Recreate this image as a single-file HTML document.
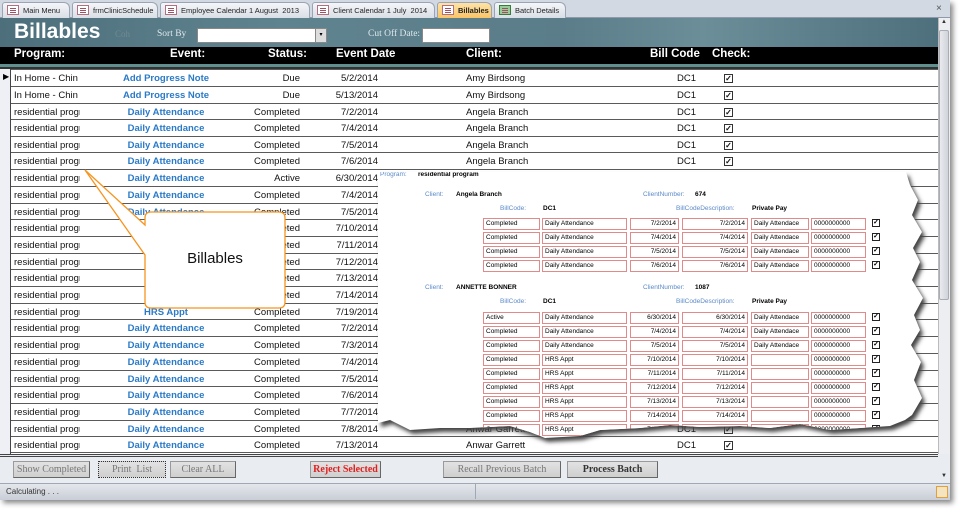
<!DOCTYPE html>
<html><head><meta charset="utf-8">
<style>
*{margin:0;padding:0;box-sizing:border-box}
body{width:960px;height:512px;background:#fff;position:relative;overflow:hidden;font-family:"Liberation Sans",sans-serif}
.a{position:absolute;white-space:nowrap}
.tab{position:absolute;top:2px;height:16px;background:linear-gradient(#f4f6f9,#d9dee6);border:1px solid #9aa4b2;border-bottom:none;border-radius:3px 6px 0 0;font-size:7.5px;color:#222;padding:3px 0 0 20px;white-space:nowrap;overflow:hidden}
.tab i{position:absolute;left:4px;top:2px;width:12px;height:10px;border:1px solid #b07080;background:#fff}
.tab i:after{content:"";position:absolute;left:2px;top:2px;width:6px;height:1px;background:#a05060;box-shadow:0 2px #a05060,0 4px #a05060}
.ch{position:absolute;top:48px;color:#fff;font-weight:bold;font-size:11.5px}
.row{position:absolute;left:11px;width:927px;height:17px;border-top:1px solid #5a5a5a;font-size:9.5px;color:#111}
.row span{position:absolute;top:3px;white-space:nowrap}
.p{left:3px;width:66px;overflow:hidden}
.e{left:80px;width:150px;text-align:center;color:#2a7ac8;font-weight:bold}
.s{right:638px;text-align:right}
.d{right:560px;text-align:right}
.c{left:455px}
.b{right:242px}
.k{left:713px;top:4px!important;width:9px;height:9px;border:1px solid #333;font-size:8px;line-height:7px;text-align:center;font-weight:bold}
.btn{position:absolute;top:461px;height:17px;background:linear-gradient(#e2e2e2,#cfcfcf);border:1px solid #9a9a9a;border-right-color:#666;border-bottom-color:#666;font-family:"Liberation Serif",serif;font-size:10px;color:#777;text-align:center;line-height:15px}
.rp{position:absolute;font-size:6.5px;white-space:nowrap}
.lb{color:#5b8ac8}
.bx{position:absolute;height:12px;border:1px solid #e08a8a;font-size:6.5px;line-height:10px;padding:0 2px;white-space:nowrap;overflow:hidden;background:#fff}
.r{text-align:right}
.cb{position:absolute;width:8px;height:8px;border:1px solid #222;font-size:7px;line-height:6px;text-align:center;font-weight:bold}
</style></head><body>
<div class="a" style="left:0;top:0;width:950px;height:500px;background:#e9ecf0;box-shadow:3px 3px 5px #888"></div>
<div class="a" style="left:0;top:0;width:950px;height:18px;background:#d3d9e2;border-bottom:1px solid #8e9aaa"></div>
<div class="tab" style="left:2px;width:68px"><i></i>Main Menu</div>
<div class="tab" style="left:72px;width:86px"><i></i>frmClinicSchedule</div>
<div class="tab" style="left:160px;width:150px"><i></i>Employee Calendar 1 August&nbsp; 2013</div>
<div class="tab" style="left:312px;width:123px"><i></i>Client Calendar 1 July&nbsp; 2014</div>
<div class="tab" style="left:437px;width:55px;background:linear-gradient(#fde3a8,#f9c466);font-weight:bold"><i></i>Billables</div>
<div class="tab" style="left:494px;width:72px"><i style="border-color:#3a7a3a;background:#9c9"></i>Batch Details</div>
<div class="a" style="left:936px;top:3px;font-size:10px;color:#555">×</div>
<div class="a" style="left:0;top:18px;width:938px;height:30px;background:linear-gradient(90deg,#4d6f7c 0%,#5f838f 30%,#5a7d89 60%,#6b8e99 75%,#4e6f7c 100%)"></div>
<div class="a" style="left:14px;top:20px;color:#fff;font-weight:bold;font-size:21px">Billables</div>
<div class="a" style="left:115px;top:29px;color:#6f8a94;font-family:'Liberation Serif',serif;font-size:9px">Coh</div>
<div class="a" style="left:157px;top:29px;color:#dfe8ec;font-family:'Liberation Serif',serif;font-size:9.5px">Sort By</div>
<div class="a" style="left:197px;top:28px;width:130px;height:15px;background:#fff;border:1px solid #888"></div>
<div class="a" style="left:315px;top:29px;width:11px;height:13px;background:#ddd;border-left:1px solid #888;font-size:6px;text-align:center;line-height:13px">▾</div>
<div class="a" style="left:368px;top:29px;color:#dfe8ec;font-family:'Liberation Serif',serif;font-size:9.5px">Cut Off Date:</div>
<div class="a" style="left:422px;top:28px;width:68px;height:15px;background:#fff;border:1px solid #888"></div>
<div class="a" style="left:0;top:47px;width:938px;height:17px;background:#000"></div>
<div class="a" style="left:0;top:64px;width:938px;height:3px;background:#5f8f8f"></div>
<div class="a" style="left:0;top:67px;width:938px;height:2px;background:#333"></div>
<div class="ch" style="left:14px">Program:</div>
<div class="ch" style="left:170px">Event:</div>
<div class="ch" style="left:268px">Status:</div>
<div class="ch" style="left:336px">Event Date</div>
<div class="ch" style="left:466px">Client:</div>
<div class="ch" style="left:650px">Bill Code</div>
<div class="ch" style="left:712px">Check:</div>
<div class="a" style="left:0;top:69px;width:938px;height:386px;background:#fff"></div>
<div class="a" style="left:0;top:69px;width:11px;height:386px;background:#eef0f6;border-right:1px solid #444"></div>
<div class="a" style="left:3px;top:72px;font-size:8px">▶</div>
<div class="row" style="top:69px"><span class="p">In Home - Chin</span><span class="e">Add Progress Note</span><span class="s">Due</span><span class="d">5/2/2014</span><span class="c">Amy Birdsong</span><span class="b">DC1</span><span class="k">✓</span></div>
<div class="row" style="top:86px"><span class="p">In Home - Chin</span><span class="e">Add Progress Note</span><span class="s">Due</span><span class="d">5/13/2014</span><span class="c">Amy Birdsong</span><span class="b">DC1</span><span class="k">✓</span></div>
<div class="row" style="top:103px"><span class="p">residential program</span><span class="e">Daily Attendance</span><span class="s">Completed</span><span class="d">7/2/2014</span><span class="c">Angela Branch</span><span class="b">DC1</span><span class="k">✓</span></div>
<div class="row" style="top:119px"><span class="p">residential program</span><span class="e">Daily Attendance</span><span class="s">Completed</span><span class="d">7/4/2014</span><span class="c">Angela Branch</span><span class="b">DC1</span><span class="k">✓</span></div>
<div class="row" style="top:136px"><span class="p">residential program</span><span class="e">Daily Attendance</span><span class="s">Completed</span><span class="d">7/5/2014</span><span class="c">Angela Branch</span><span class="b">DC1</span><span class="k">✓</span></div>
<div class="row" style="top:152px"><span class="p">residential program</span><span class="e">Daily Attendance</span><span class="s">Completed</span><span class="d">7/6/2014</span><span class="c">Angela Branch</span><span class="b">DC1</span><span class="k">✓</span></div>
<div class="row" style="top:169px"><span class="p">residential program</span><span class="e">Daily Attendance</span><span class="s">Active</span><span class="d">6/30/2014</span></div>
<div class="row" style="top:186px"><span class="p">residential program</span><span class="e">Daily Attendance</span><span class="s">Completed</span><span class="d">7/4/2014</span></div>
<div class="row" style="top:203px"><span class="p">residential program</span><span class="e">Daily Attendance</span><span class="s">Completed</span><span class="d">7/5/2014</span></div>
<div class="row" style="top:219px"><span class="p">residential program</span><span class="e">HRS Appt</span><span class="s">Completed</span><span class="d">7/10/2014</span></div>
<div class="row" style="top:236px"><span class="p">residential program</span><span class="e">HRS Appt</span><span class="s">Completed</span><span class="d">7/11/2014</span></div>
<div class="row" style="top:253px"><span class="p">residential program</span><span class="e">HRS Appt</span><span class="s">Completed</span><span class="d">7/12/2014</span></div>
<div class="row" style="top:269px"><span class="p">residential program</span><span class="e">HRS Appt</span><span class="s">Completed</span><span class="d">7/13/2014</span></div>
<div class="row" style="top:286px"><span class="p">residential program</span><span class="e">HRS Appt</span><span class="s">Completed</span><span class="d">7/14/2014</span></div>
<div class="row" style="top:303px"><span class="p">residential program</span><span class="e">HRS Appt</span><span class="s">Completed</span><span class="d">7/19/2014</span></div>
<div class="row" style="top:319px"><span class="p">residential program</span><span class="e">Daily Attendance</span><span class="s">Completed</span><span class="d">7/2/2014</span></div>
<div class="row" style="top:336px"><span class="p">residential program</span><span class="e">Daily Attendance</span><span class="s">Completed</span><span class="d">7/3/2014</span></div>
<div class="row" style="top:353px"><span class="p">residential program</span><span class="e">Daily Attendance</span><span class="s">Completed</span><span class="d">7/4/2014</span></div>
<div class="row" style="top:370px"><span class="p">residential program</span><span class="e">Daily Attendance</span><span class="s">Completed</span><span class="d">7/5/2014</span></div>
<div class="row" style="top:386px"><span class="p">residential program</span><span class="e">Daily Attendance</span><span class="s">Completed</span><span class="d">7/6/2014</span></div>
<div class="row" style="top:403px"><span class="p">residential program</span><span class="e">Daily Attendance</span><span class="s">Completed</span><span class="d">7/7/2014</span></div>
<div class="row" style="top:420px"><span class="p">residential program</span><span class="e">Daily Attendance</span><span class="s">Completed</span><span class="d">7/8/2014</span><span class="c">Anwar Garrett</span><span class="b">DC1</span><span class="k">✓</span></div>
<div class="row" style="top:436px;border-bottom:1px solid #5a5a5a"><span class="p">residential program</span><span class="e">Daily Attendance</span><span class="s">Completed</span><span class="d">7/13/2014</span><span class="c">Anwar Garrett</span><span class="b">DC1</span><span class="k">✓</span></div>
<div class="a" style="left:0;top:454px;width:938px;height:3px;border-top:1px solid #444;border-bottom:1px solid #444"></div>
<div class="a" style="left:938px;top:18px;width:12px;height:436px;background:#eceef2;border-left:1px solid #bbb"></div>
<div class="a" style="left:939px;top:30px;width:10px;height:270px;background:linear-gradient(90deg,#e8eaee,#d0d4da);border:1px solid #a8acb4;border-radius:2px"></div>
<div class="a" style="left:941px;top:19px;font-size:6px;color:#333">▲</div>
<div class="a" style="left:941px;top:473px;font-size:6px;color:#333">▼</div>
<div class="btn" style="left:13px;width:77px">Show Completed</div>
<div class="btn" style="left:98px;width:68px;border:1px dotted #333">Print&nbsp; List</div>
<div class="btn" style="left:170px;width:66px">Clear ALL</div>
<div class="btn" style="left:310px;width:71px;color:#e02020;font-weight:bold">Reject Selected</div>
<div class="btn" style="left:443px;width:118px">Recall Previous Batch</div>
<div class="btn" style="left:567px;width:91px;color:#333;font-weight:bold">Process Batch</div>
<div class="a" style="left:0;top:483px;width:950px;height:17px;background:linear-gradient(#e4e7ec,#c9ced6);border-top:1px solid #a0a8b4"></div>
<div class="a" style="left:475px;top:484px;width:1px;height:15px;background:#a0a8b4"></div>
<div class="a" style="left:6px;top:487px;font-size:8px;color:#333">Calculating . . .</div>
<div class="a" style="left:936px;top:486px;width:12px;height:12px;border:1px solid #e0a040;background:#f4e4c0"></div>
<svg class="a" style="left:0;top:0" width="960" height="512">
<defs><filter id="bl"><feGaussianBlur stdDeviation="2"/></filter></defs>
<polygon filter="url(#bl)" fill="#444" transform="translate(3,4)" points="378,172 906,172 910,185 918,200 912,215 922,232 913,248 920,262 912,280 923,298 914,315 920,330 911,345 921,362 914,380 922,398 912,415 905,420 890,426 860,428 830,430 800,424 770,428 740,426 700,427 670,425 640,428 600,430 580,436 545,438 530,432 510,426 470,428 440,428 410,430 390,420 378,423"/>
</svg>
<div class="a" style="left:0;top:0;width:960px;height:512px;background:#fff;clip-path:polygon(378px 172px,906px 172px,910px 185px,918px 200px,912px 215px,922px 232px,913px 248px,920px 262px,912px 280px,923px 298px,914px 315px,920px 330px,911px 345px,921px 362px,914px 380px,922px 398px,912px 415px,905px 420px,890px 426px,860px 428px,830px 430px,800px 424px,770px 428px,740px 426px,700px 427px,670px 425px,640px 428px,600px 430px,580px 436px,545px 438px,530px 432px,510px 426px,470px 428px,440px 428px,410px 430px,390px 420px,378px 423px)">
<div class="rp lb" style="left:380px;top:171px">Program:</div>
<div class="rp" style="left:418px;top:171px;font-weight:bold">residential program</div>
<div class="rp lb" style="left:425px;top:191px">Client:</div>
<div class="rp" style="left:456px;top:191px;font-weight:bold">Angela Branch</div>
<div class="rp lb" style="left:643px;top:191px">ClientNumber:</div>
<div class="rp" style="left:695px;top:191px;font-weight:bold">674</div>
<div class="rp lb" style="left:500px;top:205px">BillCode:</div>
<div class="rp" style="left:543px;top:205px;font-weight:bold">DC1</div>
<div class="rp lb" style="left:676px;top:205px">BillCodeDescription:</div>
<div class="rp" style="left:752px;top:205px;font-weight:bold">Private Pay</div>

<div class="bx" style="left:483px;top:218px;width:57px">Completed</div><div class="bx" style="left:542px;top:218px;width:85px">Daily Attendance</div><div class="bx r" style="left:630px;top:218px;width:49px">7/2/2014</div><div class="bx r" style="left:682px;top:218px;width:66px">7/2/2014</div><div class="bx" style="left:751px;top:218px;width:58px">Daily Attendace</div><div class="bx" style="left:811px;top:218px;width:55px">0000000000</div><div class="cb" style="left:872px;top:219px">✓</div>
<div class="bx" style="left:483px;top:232px;width:57px">Completed</div><div class="bx" style="left:542px;top:232px;width:85px">Daily Attendance</div><div class="bx r" style="left:630px;top:232px;width:49px">7/4/2014</div><div class="bx r" style="left:682px;top:232px;width:66px">7/4/2014</div><div class="bx" style="left:751px;top:232px;width:58px">Daily Attendace</div><div class="bx" style="left:811px;top:232px;width:55px">0000000000</div><div class="cb" style="left:872px;top:233px">✓</div>
<div class="bx" style="left:483px;top:246px;width:57px">Completed</div><div class="bx" style="left:542px;top:246px;width:85px">Daily Attendance</div><div class="bx r" style="left:630px;top:246px;width:49px">7/5/2014</div><div class="bx r" style="left:682px;top:246px;width:66px">7/5/2014</div><div class="bx" style="left:751px;top:246px;width:58px">Daily Attendace</div><div class="bx" style="left:811px;top:246px;width:55px">0000000000</div><div class="cb" style="left:872px;top:247px">✓</div>
<div class="bx" style="left:483px;top:260px;width:57px">Completed</div><div class="bx" style="left:542px;top:260px;width:85px">Daily Attendance</div><div class="bx r" style="left:630px;top:260px;width:49px">7/6/2014</div><div class="bx r" style="left:682px;top:260px;width:66px">7/6/2014</div><div class="bx" style="left:751px;top:260px;width:58px">Daily Attendace</div><div class="bx" style="left:811px;top:260px;width:55px">0000000000</div><div class="cb" style="left:872px;top:261px">✓</div>

<div class="rp lb" style="left:425px;top:284px">Client:</div>
<div class="rp" style="left:456px;top:284px;font-weight:bold">ANNETTE BONNER</div>
<div class="rp lb" style="left:643px;top:284px">ClientNumber:</div>
<div class="rp" style="left:695px;top:284px;font-weight:bold">1087</div>
<div class="rp lb" style="left:500px;top:298px">BillCode:</div>
<div class="rp" style="left:543px;top:298px;font-weight:bold">DC1</div>
<div class="rp lb" style="left:676px;top:298px">BillCodeDescription:</div>
<div class="rp" style="left:752px;top:298px;font-weight:bold">Private Pay</div>

<div class="bx" style="left:483px;top:312px;width:57px">Active</div><div class="bx" style="left:542px;top:312px;width:85px">Daily Attendance</div><div class="bx r" style="left:630px;top:312px;width:49px">6/30/2014</div><div class="bx r" style="left:682px;top:312px;width:66px">6/30/2014</div><div class="bx" style="left:751px;top:312px;width:58px">Daily Attendace</div><div class="bx" style="left:811px;top:312px;width:55px">0000000000</div><div class="cb" style="left:872px;top:313px">✓</div>
<div class="bx" style="left:483px;top:326px;width:57px">Completed</div><div class="bx" style="left:542px;top:326px;width:85px">Daily Attendance</div><div class="bx r" style="left:630px;top:326px;width:49px">7/4/2014</div><div class="bx r" style="left:682px;top:326px;width:66px">7/4/2014</div><div class="bx" style="left:751px;top:326px;width:58px">Daily Attendace</div><div class="bx" style="left:811px;top:326px;width:55px">0000000000</div><div class="cb" style="left:872px;top:327px">✓</div>
<div class="bx" style="left:483px;top:340px;width:57px">Completed</div><div class="bx" style="left:542px;top:340px;width:85px">Daily Attendance</div><div class="bx r" style="left:630px;top:340px;width:49px">7/5/2014</div><div class="bx r" style="left:682px;top:340px;width:66px">7/5/2014</div><div class="bx" style="left:751px;top:340px;width:58px">Daily Attendace</div><div class="bx" style="left:811px;top:340px;width:55px">0000000000</div><div class="cb" style="left:872px;top:341px">✓</div>
<div class="bx" style="left:483px;top:354px;width:57px">Completed</div><div class="bx" style="left:542px;top:354px;width:85px">HRS Appt</div><div class="bx r" style="left:630px;top:354px;width:49px">7/10/2014</div><div class="bx r" style="left:682px;top:354px;width:66px">7/10/2014</div><div class="bx" style="left:751px;top:354px;width:58px"></div><div class="bx" style="left:811px;top:354px;width:55px">0000000000</div><div class="cb" style="left:872px;top:355px">✓</div>
<div class="bx" style="left:483px;top:368px;width:57px">Completed</div><div class="bx" style="left:542px;top:368px;width:85px">HRS Appt</div><div class="bx r" style="left:630px;top:368px;width:49px">7/11/2014</div><div class="bx r" style="left:682px;top:368px;width:66px">7/11/2014</div><div class="bx" style="left:751px;top:368px;width:58px"></div><div class="bx" style="left:811px;top:368px;width:55px">0000000000</div><div class="cb" style="left:872px;top:369px">✓</div>
<div class="bx" style="left:483px;top:382px;width:57px">Completed</div><div class="bx" style="left:542px;top:382px;width:85px">HRS Appt</div><div class="bx r" style="left:630px;top:382px;width:49px">7/12/2014</div><div class="bx r" style="left:682px;top:382px;width:66px">7/12/2014</div><div class="bx" style="left:751px;top:382px;width:58px"></div><div class="bx" style="left:811px;top:382px;width:55px">0000000000</div><div class="cb" style="left:872px;top:383px">✓</div>
<div class="bx" style="left:483px;top:396px;width:57px">Completed</div><div class="bx" style="left:542px;top:396px;width:85px">HRS Appt</div><div class="bx r" style="left:630px;top:396px;width:49px">7/13/2014</div><div class="bx r" style="left:682px;top:396px;width:66px">7/13/2014</div><div class="bx" style="left:751px;top:396px;width:58px"></div><div class="bx" style="left:811px;top:396px;width:55px">0000000000</div><div class="cb" style="left:872px;top:397px">✓</div>
<div class="bx" style="left:483px;top:410px;width:57px">Completed</div><div class="bx" style="left:542px;top:410px;width:85px">HRS Appt</div><div class="bx r" style="left:630px;top:410px;width:49px">7/14/2014</div><div class="bx r" style="left:682px;top:410px;width:66px">7/14/2014</div><div class="bx" style="left:751px;top:410px;width:58px"></div><div class="bx" style="left:811px;top:410px;width:55px">0000000000</div><div class="cb" style="left:872px;top:411px">✓</div>
<div class="bx" style="left:483px;top:424px;width:57px">Completed</div><div class="bx" style="left:542px;top:424px;width:85px">HRS Appt</div><div class="bx r" style="left:630px;top:424px;width:49px">7/19/2014</div><div class="bx r" style="left:682px;top:424px;width:66px">7/19/2014</div><div class="bx" style="left:751px;top:424px;width:58px"></div><div class="bx" style="left:811px;top:424px;width:55px">0000000000</div><div class="cb" style="left:872px;top:425px">✓</div>
</div>
<svg class="a" style="left:0;top:0" width="960" height="512">
<path d="M151,212 H279 Q285,212 285,218 V302 Q285,308 279,308 H151 Q145,308 145,302 V255 L85,170 L145,225 V218 Q145,212 151,212 Z" fill="#fff" stroke="#f7941d" stroke-width="1.3"/>
</svg>
<div class="a" style="left:145px;top:250px;width:140px;text-align:center;font-size:15px;color:#111">Billables</div>
</body></html>
